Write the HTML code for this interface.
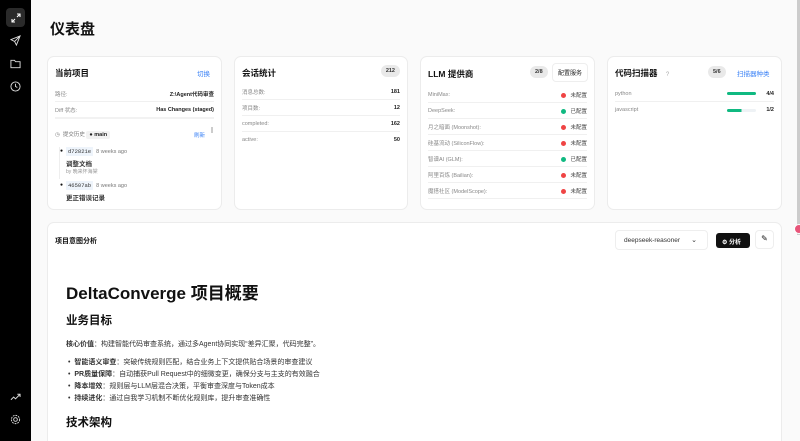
<!DOCTYPE html>
<html style="width:800px;height:441px;overflow:hidden"><head><meta charset="utf-8"><style>
*{box-sizing:border-box;margin:0;padding:0}
body{width:800px;height:441px;overflow:hidden;background:#fafafa;font-family:"Liberation Sans","Noto Sans CJK SC",sans-serif;color:#111;position:relative}
.sb{position:absolute;left:0;top:0;width:31px;height:441px;background:#000}
.ic{position:absolute;left:6px;width:19px;height:19px;display:flex;align-items:center;justify-content:center}
.card{position:absolute;background:#fff;border:1px solid #ececec;border-radius:7px}
.t{position:absolute;font-size:8.5px;font-weight:bold}
.row{position:absolute;left:7px;right:7px;height:16px;border-bottom:1px solid #f0f0f0;font-size:5.5px;color:#888;display:flex;justify-content:space-between;align-items:center}
.row b{color:#222;font-weight:bold}
.badge{position:absolute;background:#e9e9e9;border-radius:8px;font-size:5.5px;font-weight:bold;padding:3px 5px;color:#333}
.dot{display:inline-block;width:5px;height:5px;border-radius:50%;margin-right:4px;vertical-align:middle}
.st{color:#444}
.blue{color:#3b82f6}
</style></head><body>
<div class="sb">
 <div class="ic" style="top:8px;background:#2a2a2a;border-radius:4px"><svg width="10" height="10" viewBox="0 0 10 10" stroke="#fff" stroke-width="1.1" fill="none"><path d="M6 1h3v3M9 1L6 4M4 9H1V6M1 9l3-3"/></svg></div>
 <div class="ic" style="top:31px"><svg width="11" height="11" viewBox="0 0 12 12" stroke="#ddd" stroke-width="1" fill="none"><path d="M11 1L1 5l4 2 2 4z M11 1L5 7"/></svg></div>
 <div class="ic" style="top:54px"><svg width="11" height="10" viewBox="0 0 12 10" stroke="#ddd" stroke-width="1" fill="none"><path d="M1 1h4l1 1.5h5v6.5H1z"/></svg></div>
 <div class="ic" style="top:77px"><svg width="11" height="11" viewBox="0 0 12 12" stroke="#ddd" stroke-width="1" fill="none"><circle cx="6" cy="6" r="5"/><path d="M6 3v3l2 1"/></svg></div>
 <div class="ic" style="top:387px"><svg width="11" height="8" viewBox="0 0 12 8" stroke="#ddd" stroke-width="1" fill="none"><path d="M1 7l3-3 2 2 5-5M8 1h3v3"/></svg></div>
 <div class="ic" style="top:410px"><svg width="11" height="11" viewBox="0 0 12 12" stroke="#ddd" stroke-width="1" fill="none"><circle cx="6" cy="6" r="2"/><circle cx="6" cy="6" r="4.5" stroke-dasharray="2 1"/></svg></div>
</div>
<div style="position:absolute;left:50px;top:18px;font-size:15px;font-weight:bold">仪表盘</div>

<div class="card" style="left:47px;top:56px;width:175px;height:154px">
 <div class="t" style="left:7px;top:10px">当前项目</div>
 <div style="position:absolute;right:11px;top:11px;font-size:6.5px" class="blue">切换</div>
 <div class="row" style="top:29px"><span>路径:</span><b>Z:\Agent代码审查</b></div>
 <div class="row" style="top:46px;border-bottom:2px solid #f2f2f2"><span>Diff 状态:</span><b>Has Changes (staged)</b></div>
 <div style="position:absolute;left:7px;top:73px;font-size:5.5px;color:#777">◷ &nbsp;提交历史 <span style="background:#f2f2f2;color:#222;font-weight:bold;padding:1px 3px;border-radius:2px">● main</span></div>
 <div style="position:absolute;left:146px;top:74px;font-size:5.5px" class="blue">刷新</div>
 <div style="position:absolute;left:163px;top:70px;width:2px;height:6px;background:#ccc"></div>
 <div style="position:absolute;left:11px;top:90px;width:1px;height:32px;background:#eee"></div>
 <div style="position:absolute;left:12px;top:91px;font-size:5px">●</div>
 <div style="position:absolute;left:18px;top:91px;font-size:5.5px;color:#777"><span style="background:#eef4fb;color:#333;font-family:'Liberation Mono',monospace;padding:1px 2px">d72821e</span> &nbsp;8 weeks ago</div>
 <div style="position:absolute;left:18px;top:101px;font-size:6.5px;font-weight:bold;color:#333">调整文档</div>
 <div style="position:absolute;left:18px;top:111px;font-size:5px;color:#999">by 晚来怀海棠</div>
 <div style="position:absolute;left:12px;top:125px;font-size:5px">●</div>
 <div style="position:absolute;left:18px;top:125px;font-size:5.5px;color:#777"><span style="background:#eef4fb;color:#333;font-family:'Liberation Mono',monospace;padding:1px 2px">46507ab</span> &nbsp;8 weeks ago</div>
 <div style="position:absolute;left:18px;top:135px;font-size:6.5px;font-weight:bold;color:#333">更正错误记录</div>
</div>

<div class="card" style="left:234px;top:56px;width:174px;height:154px">
 <div class="t" style="left:7px;top:10px">会话统计</div>
 <div class="badge" style="right:7px;top:8px">212</div>
 <div class="row" style="top:27px"><span>消息总数:</span><b>181</b></div>
 <div class="row" style="top:43px"><span>项目数:</span><b>12</b></div>
 <div class="row" style="top:59px"><span>completed:</span><b>162</b></div>
 <div class="row" style="top:75px;border:none"><span>active:</span><b>50</b></div>
</div>

<div class="card" style="left:420px;top:56px;width:175px;height:154px">
 <div class="t" style="left:7px;top:11px">LLM 提供商</div>
 <div class="badge" style="left:109px;top:9px">2/8</div>
 <div style="position:absolute;left:131px;top:6px;border:1px solid #eee;border-radius:4px;font-size:6px;padding:4px 5px;color:#222">配置服务</div>
 <div class="row" style="top:30px"><span>MiniMax:</span><span class="st"><i class="dot" style="background:#ef4444"></i>未配置</span></div>
 <div class="row" style="top:46px"><span>DeepSeek:</span><span class="st"><i class="dot" style="background:#10b981"></i>已配置</span></div>
 <div class="row" style="top:62px"><span>月之暗面 (Moonshot):</span><span class="st"><i class="dot" style="background:#ef4444"></i>未配置</span></div>
 <div class="row" style="top:78px"><span>硅基流动 (SiliconFlow):</span><span class="st"><i class="dot" style="background:#ef4444"></i>未配置</span></div>
 <div class="row" style="top:94px"><span>智谱AI (GLM):</span><span class="st"><i class="dot" style="background:#10b981"></i>已配置</span></div>
 <div class="row" style="top:110px"><span>阿里百炼 (Bailian):</span><span class="st"><i class="dot" style="background:#ef4444"></i>未配置</span></div>
 <div class="row" style="top:126px"><span>魔搭社区 (ModelScope):</span><span class="st"><i class="dot" style="background:#ef4444"></i>未配置</span></div>
</div>

<div class="card" style="left:607px;top:56px;width:175px;height:154px">
 <div class="t" style="left:7px;top:10px">代码扫描器 <span style="color:#aaa;font-weight:normal;font-size:6px;margin-left:6px">?</span></div>
 <div class="badge" style="left:100px;top:9px">5/6</div>
 <div style="position:absolute;left:129px;top:11px;font-size:6.5px" class="blue">扫描器种类</div>
 <div class="row" style="top:29px"><span>python</span><span style="display:flex;align-items:center"><i style="width:29px;height:3px;background:#10b981;border-radius:2px;margin-right:10px"></i><b>4/4</b></span></div>
 <div class="row" style="top:45px;border:none"><span>javascript</span><span style="display:flex;align-items:center"><i style="width:29px;height:3px;background:linear-gradient(90deg,#10b981 50%,#eef2f5 50%);border-radius:2px;margin-right:10px"></i><b>1/2</b></span></div>
</div>

<div class="card" style="left:47px;top:222px;width:735px;height:230px">
 <div style="position:absolute;left:7px;top:13px;font-size:7px;font-weight:bold">项目意图分析</div>
 <div style="position:absolute;left:567px;top:7px;width:93px;height:20px;border:1px solid #eee;border-radius:4px;font-size:6.5px;color:#333;padding:6px 0 0 8px">deepseek-reasoner<span style="position:absolute;right:10px;top:5px;font-size:7px">⌄</span></div>
 <div style="position:absolute;left:668px;top:10px;width:34px;height:15px;background:#111;border-radius:3px;color:#fff;font-size:6px;font-weight:bold;padding:4px 0 0 6px">⚙ 分析</div>
 <div style="position:absolute;left:707px;top:7px;width:19px;height:19px;border:1px solid #eee;border-radius:4px;font-size:8px;text-align:center;padding-top:3px">✎</div>
 <div style="position:absolute;left:18px;top:56px;font-size:17px;font-weight:bold">DeltaConverge 项目概要</div>
 <div style="position:absolute;left:18px;top:89px;font-size:11.5px;font-weight:bold">业务目标</div>
 <div style="position:absolute;left:18px;top:116px;font-size:7px;color:#333"><b>核心价值</b>：构建智能代码审查系统，通过多Agent协同实现“差异汇聚，代码完整”。</div>
 <div style="position:absolute;left:20px;top:134px;font-size:7px;color:#333;line-height:12px">
  <div>• &nbsp;<b>智能语义审查</b>：突破传统规则匹配，结合业务上下文提供贴合场景的审查建议</div>
  <div>• &nbsp;<b>PR质量保障</b>：自动捕获Pull Request中的细微变更，确保分支与主支的有效融合</div>
  <div>• &nbsp;<b>降本增效</b>：规则层与LLM层混合决策，平衡审查深度与Token成本</div>
  <div>• &nbsp;<b>持续进化</b>：通过自我学习机制不断优化规则库，提升审查准确性</div>
 </div>
 <div style="position:absolute;left:18px;top:191px;font-size:11.5px;font-weight:bold">技术架构</div>
</div>
<div style="position:absolute;left:797px;top:0;width:3px;height:235px;background:#ccc"></div>
<div style="position:absolute;left:794px;top:224px;width:10px;height:10px;border-radius:50%;background:#e8557a;border:1px solid #fff"></div>
</body></html>
